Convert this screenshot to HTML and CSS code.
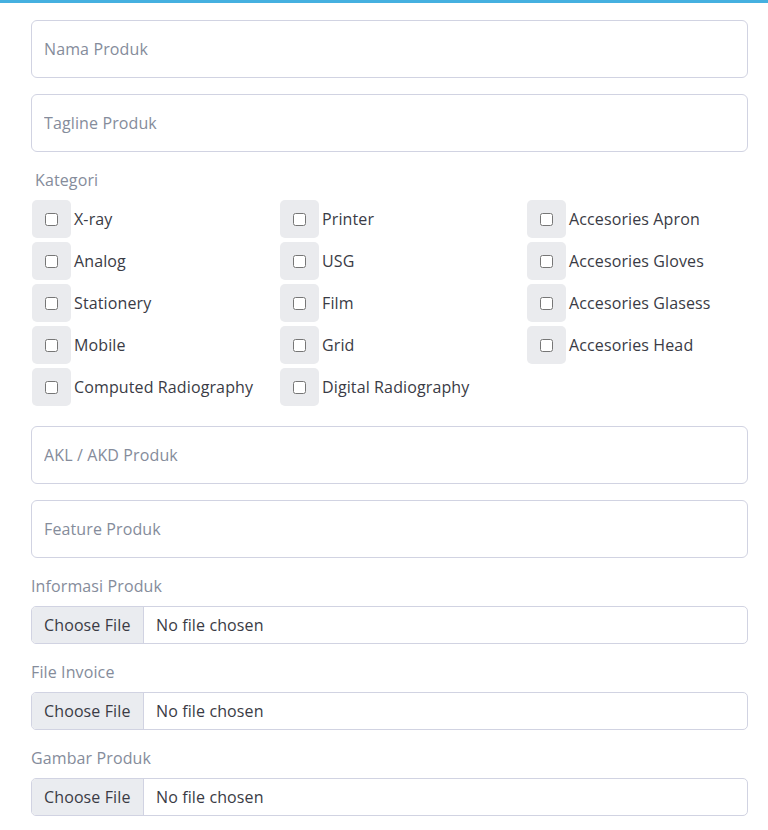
FILE: index.html
```html
<!DOCTYPE html>
<html>
<head>
<meta charset="utf-8">
<link rel="stylesheet" href="styles.css">
</head>
<body>
<div class="topbar"></div>
<form class="form">
  <div class="field"><input class="text-input" type="text" placeholder="Nama Produk"></div>
  <div class="field"><input class="text-input" type="text" placeholder="Tagline Produk"></div>
  <div class="label label-indent">Kategori</div>
  <div class="check-grid">
    <label class="check"><span class="check-box"><input type="checkbox"></span><span class="check-text">X-ray</span></label>
    <label class="check"><span class="check-box"><input type="checkbox"></span><span class="check-text">Printer</span></label>
    <label class="check"><span class="check-box"><input type="checkbox"></span><span class="check-text">Accesories Apron</span></label>
    <label class="check"><span class="check-box"><input type="checkbox"></span><span class="check-text">Analog</span></label>
    <label class="check"><span class="check-box"><input type="checkbox"></span><span class="check-text">USG</span></label>
    <label class="check"><span class="check-box"><input type="checkbox"></span><span class="check-text">Accesories Gloves</span></label>
    <label class="check"><span class="check-box"><input type="checkbox"></span><span class="check-text">Stationery</span></label>
    <label class="check"><span class="check-box"><input type="checkbox"></span><span class="check-text">Film</span></label>
    <label class="check"><span class="check-box"><input type="checkbox"></span><span class="check-text">Accesories Glasess</span></label>
    <label class="check"><span class="check-box"><input type="checkbox"></span><span class="check-text">Mobile</span></label>
    <label class="check"><span class="check-box"><input type="checkbox"></span><span class="check-text">Grid</span></label>
    <label class="check"><span class="check-box"><input type="checkbox"></span><span class="check-text">Accesories Head</span></label>
    <label class="check"><span class="check-box"><input type="checkbox"></span><span class="check-text">Computed Radiography</span></label>
    <label class="check"><span class="check-box"><input type="checkbox"></span><span class="check-text">Digital Radiography</span></label>
  </div>
  <div class="field field-after-grid"><input class="text-input" type="text" placeholder="AKL / AKD Produk"></div>
  <div class="field"><input class="text-input" type="text" placeholder="Feature Produk"></div>
  <div class="label">Informasi Produk</div>
  <div class="file"><span class="file-btn">Choose File</span><span class="file-name">No file chosen</span></div>
  <div class="label">File Invoice</div>
  <div class="file"><span class="file-btn">Choose File</span><span class="file-name">No file chosen</span></div>
  <div class="label">Gambar Produk</div>
  <div class="file"><span class="file-btn">Choose File</span><span class="file-name">No file chosen</span></div>
</form>
</body>
</html>
```
FILE: styles.css
```css
* { box-sizing: border-box; }
html, body { margin: 0; padding: 0; background: #fff; }
body {
  font-family: "Open Sans", "Noto Sans", sans-serif;
  font-size: 16px;
  line-height: 24px;
  letter-spacing: 0.12px;
  color: #858796;
  overflow: hidden;
}
.topbar { height: 3px; background: #45b0e0; }
.form {
  padding: 17px 20px 0 31px;
  display: flex;
  flex-direction: column;
}
.field { margin-bottom: 16px; }
.field-after-grid { margin-top: 20px; }
.text-input {
  display: block;
  width: 100%;
  height: 58px;
  border: 1px solid #d1d3e2;
  border-radius: 6px;
  padding: 0 12px;
  font-family: inherit;
  font-size: 16px;
  letter-spacing: 0.12px;
  color: #3a3b45;
  background: #fff;
  outline: none;
}
.text-input::placeholder { color: #858c9b; }
.label { height: 24px; margin-bottom: 8px; color: #858c9b; }
.label-indent { padding-left: 4px; }
.check-grid {
  display: grid;
  grid-template-columns: 248px 247px 247px;
  row-gap: 4px;
  margin-left: 1px;
  margin-right: -40px;
}
.check { display: flex; align-items: center; height: 38px; }
.check-box {
  width: 39px;
  height: 38px;
  background: #eaebee;
  border-radius: 5px;
  display: flex;
  align-items: center;
  justify-content: center;
}
.check-box input { margin: 0; width: 13px; height: 13px; }
.check-text { margin-left: 3px; color: #3a3b45; white-space: nowrap; }
.file {
  display: flex;
  height: 38px;
  border: 1px solid #d1d3e2;
  border-radius: 5px;
  overflow: hidden;
  margin-bottom: 16px;
}
.file-btn {
  width: 112px;
  background: #eaecf0;
  border-right: 1px solid #d1d3e2;
  display: flex;
  align-items: center;
  padding-left: 12px;
  color: #3a3b45;
}
.file-name { display: flex; align-items: center; padding-left: 12px; color: #3a3b45; }
```
